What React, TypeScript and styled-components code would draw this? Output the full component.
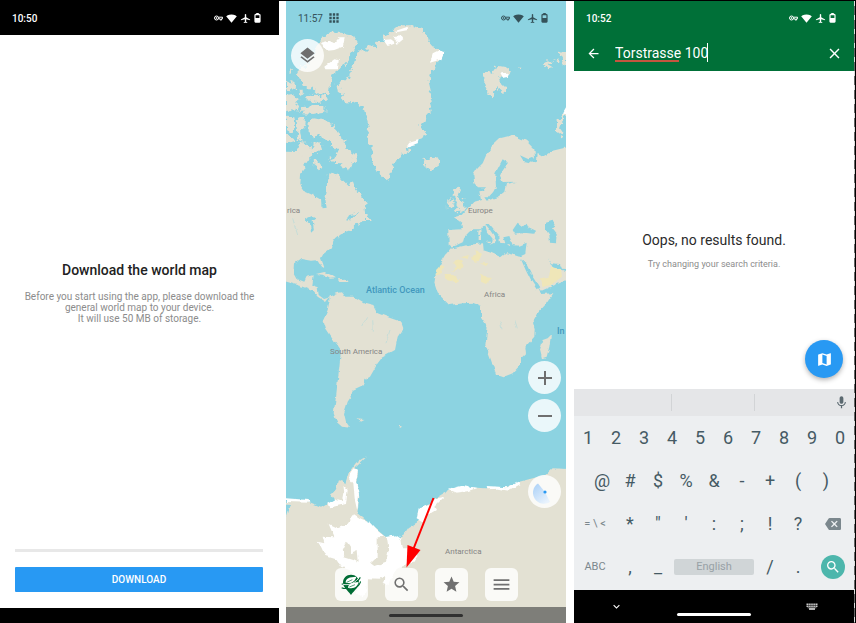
import React from 'react';
import styled, { createGlobalStyle } from 'styled-components';
import {
  MdAirplanemodeActive, MdApps, MdArrowBack, MdBackspace, MdClose, MdKeyboardArrowDown,
  MdLayers, MdMap, MdMenu, MdMic, MdSearch, MdSignalWifi4Bar, MdStar,
} from 'react-icons/md';

const GlobalStyle = createGlobalStyle`
  *, *::before, *::after { box-sizing: border-box; }
  body { margin: 0; background: #fff; font-family: Roboto, "Noto Sans", sans-serif; }
  button, input { font: inherit; color: inherit; border: 0; padding: 0; margin: 0; background: none; }
  h1, h2, p { margin: 0; }
  svg { display: block; flex: none; }
`;

const Page = styled.div`
  min-height: 100vh;
  display: grid;
  grid-template-columns: 279fr 280fr 283fr;
  column-gap: 7px;
  border-top: 1px solid #000;
`;

const Screen = styled.section`
  position: relative;
  min-width: 0;
  display: flex;
  flex-direction: column;
`;

const SearchScreen = styled(Screen)`
  margin-left: 1px;
  padding-right: 2px;
  &::after {
    content: '';
    position: absolute;
    top: 0;
    right: 0;
    bottom: 0;
    width: 2px;
    border-right: 1px solid #000;
    background: repeating-linear-gradient(#ddd 0 5px, #666 5px 14px);
  }
`;

const StatusBar = styled.div<{ $bg: string; $ink: string; $bold?: boolean }>`
  height: 34px;
  flex: none;
  display: flex;
  align-items: center;
  gap: 4px;
  padding: 0 18px 0 12px;
  background: ${p => p.$bg};
  color: ${p => p.$ink};
  font-size: 10px;
  font-weight: ${p => (p.$bold ? 500 : 400)};
`;

const StatusIcons = styled.div`
  margin-left: auto;
  display: flex;
  align-items: center;
  gap: 3px;
`;

const KeyIcon = () => (
  <svg width="9" height="6" viewBox="0 0 9 6" fill="none" stroke="currentColor" strokeWidth="1">
    <circle cx="2.5" cy="3" r="2" /><circle cx="2.5" cy="3" r=".5" />
    <path d="M4.500 2.200H8.500V3.700H7.600V5H6.200V3.800H4.400" />
  </svg>
);

const BatteryIcon = () => (
  <svg width="7" height="10" viewBox="0 0 7 10" fill="none" stroke="currentColor">
    <path d="M2.300 1.200V.5H4.700V1.200" />
    <rect x="1" y="1.7" width="5" height="7.4" rx=".5" strokeWidth="1.2" />
    <path d="M1 5H6V9H1z" fill="currentColor" stroke="none" />
  </svg>
);

const Status = ({ time, bg, ink, bold, apps }: { time: string; bg: string; ink: string; bold?: boolean; apps?: boolean }) => (
  <StatusBar $bg={bg} $ink={ink} $bold={bold}>
    <span>{time}</span>
    {apps && <MdApps size={14} />}
    <StatusIcons>
      <KeyIcon />
      <MdSignalWifi4Bar size={11} />
      <MdAirplanemodeActive size={11} />
      <BatteryIcon />
    </StatusIcons>
  </StatusBar>
);

/* Download screen */

const Intro = styled.div`
  flex: 1;
  display: flex;
  flex-direction: column;
  justify-content: center;
  align-items: center;
  text-align: center;
  padding: 0 16px;
`;

const IntroTitle = styled.h1`
  font-size: 14px;
  line-height: 18px;
  font-weight: 500;
  color: #222;
`;

const IntroText = styled.p`
  margin-top: 12px;
  font-size: 10px;
  line-height: 11px;
  color: #8c8c8c;
`;

const DownloadActions = styled.div`
  padding: 0 16px 16px 15px;
  display: flex;
  flex-direction: column;
  gap: 15px;
`;

const Progress = styled.div`
  height: 3px;
  background: #e8e8e8;
`;

const DownloadButton = styled.button`
  height: 25px;
  border-radius: 1px;
  background: #2899f3;
  color: #fff;
  font-size: 10px;
  font-weight: 500;
`;

const BlackBar = styled.div`
  height: 15px;
  background: #000;
`;

/* Map screen */

const MapCanvas = styled.svg`
  position: absolute;
  inset: 0;
  width: 100%;
  height: 100%;
  background: #8cd3e1;
`;

const MapOverlay = styled.div`
  position: relative;
  flex: 1;
  display: flex;
  flex-direction: column;
`;

const RoundButton = styled.button`
  width: 33px;
  height: 33px;
  border-radius: 50%;
  display: grid;
  place-items: center;
  background: rgba(255, 255, 255, 0.82);
  color: #6f6f6f;
`;

const TopControls = styled.div`
  padding: 4px 5px;
`;

const SideControls = styled.div`
  margin-top: auto;
  padding: 0 5px 60px;
  display: flex;
  flex-direction: column;
  align-items: flex-end;
  gap: 5px;
`;

const LocationButton = styled(RoundButton)`
  margin-top: 38px;
`;

const Toolbar = styled.nav`
  display: flex;
  justify-content: center;
  gap: 17px;
  padding-bottom: 6px;
`;

const ToolButton = styled.button`
  width: 33px;
  height: 33px;
  border-radius: 6px;
  display: grid;
  place-items: center;
  background: rgba(255, 255, 255, 0.82);
  color: #707070;
`;

const GreyBar = styled.div`
  height: 16px;
  display: grid;
  place-items: center;
  background: #7e7e79;
`;

const HomePill = styled.div<{ $ink: string }>`
  width: 74px;
  height: 3px;
  border-radius: 2px;
  background: ${p => p.$ink};
`;

const ArrowMark = styled.svg`
  position: absolute;
  left: 119px;
  bottom: 54px;
`;

const WATER = '#8cd3e1';
const LAND = '#e3e1d3';
const SAND = '#efe6b8';

const Logo = () => (
  <svg width="20" height="22" viewBox="0 0 60 66">
    <path d="M30 2C44 2 54 12 54 26C54 39 42 46 30 63C18 46 6 39 6 26C6 12 16 2 30 2Z" fill="#006c35" />
    <path d="M2 30C10 31 16 30 21 27M58 10C52 20 46 27 36 28M2 41C10 45 16 44 22 41M59 22C55 34 48 40 38 42" stroke="#006c35" strokeWidth="3.500" fill="none" />
    <path d="M14 26C13 12 26 9 46 8C42 22 32 30 14 26Z" fill="#fff" />
    <path d="M6 31C22 34 38 30 52 14" stroke="#fff" strokeWidth="2.500" fill="none" />
    <path d="M21 41C22 28 34 26 53 24C50 38 38 46 21 41Z" fill="#fff" />
    <path d="M17 25L34 17M25 39L42 32" stroke="#006c35" strokeWidth="2" />
  </svg>
);

const WorldMap = () => (
  <MapCanvas viewBox="0 1 280 622" preserveAspectRatio="xMidYMid slice" role="img" aria-label="World map">
    <defs>
      <filter id="coast" x="0" y="0" width="100%" height="100%">
        <feTurbulence type="fractalNoise" baseFrequency="0.16" numOctaves="2" seed="4" />
        <feDisplacementMap in="SourceGraphic" scale="4" xChannelSelector="R" yChannelSelector="G" />
      </filter>
      <filter id="fjords" x="0" y="0" width="100%" height="100%">
        <feTurbulence type="fractalNoise" baseFrequency="0.22" numOctaves="2" seed="9" />
        <feDisplacementMap in="SourceGraphic" scale="8" xChannelSelector="R" yChannelSelector="G" />
      </filter>
    </defs>
    <g filter="url(#fjords)">
      <g transform="scale(.33333)" fill={LAND}>
        <path d="M215 150L245 152L240 136L268 142L272 128L295 130L290 108L318 94L340 76L375 76L402 85L425 105L428 125L440 140L455 150L472 155L470 172L450 190L448 205L435 220L428 245L432 262L438 290L430 310L438 335L420 345L415 365L400 380L418 395L415 412L395 420L370 440L358 460L340 475L325 485L315 515L308 545L290 535L275 515L262 490L258 465L260 440L248 425L245 400L250 385L240 350L232 320L205 305L175 308L165 295L175 285L158 275L155 258L170 240L190 232L195 210L205 190Z" />
        <path d="M102 118L130 98L165 98L200 106L214 130L200 160L180 185L160 208L138 225L142 250L128 262L125 282L95 280L78 262L55 262L42 240L30 222L38 205L60 200L90 150Z" />
        <path d="M60 290L90 284L122 288L126 302L90 306L62 300ZM48 322L80 318L118 318L118 338L80 342L50 340ZM0 240L20 248L35 262L18 272L0 268ZM0 285L20 282L40 298L28 310L42 335L20 328L0 340ZM5 350L25 352L28 380L12 400L0 390L0 360ZM38 352L60 350L58 375L45 390L50 425L38 420L32 385ZM10 205L18 212L14 222L8 214ZM42 270L52 275L44 286L38 278ZM0 410L18 412L30 425L14 430L0 424Z" />
        <path d="M68 368L80 355L108 360L130 362L134 378L155 388L160 408L182 425L180 445L205 462L212 470L200 490L192 512L175 505L165 490L140 488L130 478L150 470L155 452L138 438L128 420L105 418L100 400L82 412L68 400ZM85 425L104 430L108 450L90 462L78 450ZM80 478L100 488L112 505L98 508L82 495ZM30 455L42 425L60 432L80 450L72 475L60 490L50 480Z" />
        <path d="M592 220L605 212L620 222L628 200L640 198L660 202L675 212L668 228L650 232L640 228L645 250L658 262L655 282L642 272L632 258L625 275L622 298L608 282L600 262L592 250ZM698 202L708 204L704 210ZM770 192L790 180L800 188L788 196L802 204L785 208ZM800 180L818 175L815 190ZM820 155L840 150L840 200L825 195L832 178ZM840 325L830 345L812 368L808 395L828 410L832 400L822 385L832 360L840 345Z" />
        <path d="M408 478L425 482L430 472L450 470L462 485L452 500L430 508L415 500L420 490Z" />
        <path d="M502 565L515 560L522 570L515 585L530 600L535 618L542 628L528 638L508 640L516 624L508 610L512 596L500 585ZM488 600L500 590L505 605L498 622L482 622Z" />
        <path d="M128 530L140 518L160 530L175 545L190 560L198 542L208 570L228 588L242 604L240 622L225 636L190 645L178 660L205 648L220 640L232 628L240 645L258 660L235 660L215 672L190 690L165 700L140 720L120 700L110 620Z" />
      </g>
    </g>
    <g filter="url(#coast)">
      <g transform="scale(.33333)">
        <path fill={LAND} d="M-20 452L35 453L52 470L58 505L42 525L40 555L52 572L80 585L106 600L106 620L120 620L133 590L126 560L130 520L160 535L190 570L215 580L235 615L200 640L175 650L180 668L200 670L188 692L165 700L140 720L135 745L112 762L105 775L116 805L108 800L95 780L75 782L45 777L27 790L25 820L35 838L55 845L62 830L80 826L76 855L95 862L98 885L115 898L130 893L120 906L95 890L80 872L50 860L-20 840Z" />
        <path fill={LAND} d="M130 890L150 880L168 877L178 890L205 890L235 908L262 915L275 940L310 953L345 965L352 985L335 1010L327 1050L290 1070L275 1090L252 1130L235 1140L232 1155L200 1170L195 1190L185 1205L180 1222L174 1240L180 1265L192 1283L168 1280L152 1266L143 1240L150 1190L160 1100L165 1050L140 1015L120 985L112 960L125 930L130 905Z" />
        <path fill={LAND} d="M90 822L115 816L135 825L150 835L132 836L110 824ZM155 838L180 836L188 846L160 846ZM215 1255L232 1257L222 1262ZM338 1275L348 1280L342 1284ZM795 1005L790 1040L782 1070L768 1075L762 1050L770 1020L785 1015Z" />
        <path fill={LAND} d="M562 525L575 505L590 490L602 462L620 435L642 415L680 405L720 422L745 448L747 470L728 478L702 466L712 482L736 488L752 486L755 462L770 470L800 452L860 438L860 832L820 850L790 862L765 873L757 862L765 882L802 880L780 912L755 940L740 965L746 985L745 1010L718 1040L720 1060L705 1075L705 1092L680 1120L650 1132L630 1125L615 1080L598 1035L605 980L585 950L585 918L560 908L530 910L490 915L475 900L455 880L445 850L450 820L465 790L480 765L500 742L488 733L487 690L528 688L526 668L504 652L527 645L545 625L562 606L585 600L580 574L592 572L600 562L576 562L565 550Z" />
        <path fill={WATER} d="M650 478L666 488L650 512L642 530L650 546L690 545L660 552L655 575L635 592L602 602L595 592L608 592L622 575L630 560L628 520L638 500Z" />
        <path fill={WATER} d="M495 740L512 735L530 727L534 712L550 695L562 688L585 688L598 676L603 695L620 716L618 728L610 735L625 728L632 720L612 690L598 672L608 672L630 698L640 710L642 728L658 730L652 712L670 708L680 735L700 737L722 728L718 762L700 770L682 764L660 760L645 772L615 758L590 750L588 730L545 735L505 744ZM680 690L695 668L710 680L722 668L728 682L750 692L745 704L705 700L688 704ZM705 778L720 790L740 830L760 862L752 868L735 842L720 812ZM786 775L796 790L822 792L828 806L845 808L845 815L820 808L800 802ZM780 668L800 662L806 675L798 682L812 700L810 730L792 728L790 705L780 690Z" />
        <path fill={LAND} d="M577 692L583 690L584 704L577 705ZM578 708L585 708L585 720L578 720ZM660 733L672 733L668 738ZM602 722L615 722L612 730Z" />
        <path fill={WATER} d="M57 656L75 648L90 656L80 664L84 690L75 698L72 670ZM105 600L118 598L122 620L110 622Z" />
        <path fill={SAND} d="M448 824L460 796L472 798L466 820ZM472 822L498 822L520 840L510 847L482 840ZM502 785L525 780L533 795L525 808L495 813L512 800ZM525 772L548 765L545 778ZM556 778L572 750L588 765L580 782L568 785ZM582 790L608 790L600 798ZM582 824L600 832L618 834L600 852L585 845ZM765 835L788 830L795 802L825 808L828 830L795 855L770 862Z" />
        <path stroke={WATER} fill="none" d="M245 952L230 978M260 958L262 995M312 990L300 1030M642 960L648 988M686 960L694 985M20 655L35 705" />
        <path fill={LAND} d="M-20 1505L60 1505L105 1523L145 1500L135 1485L150 1468L155 1445L168 1440L178 1450L188 1418L210 1388L242 1368L206 1402L216 1420L210 1450L220 1490L214 1540L250 1570L300 1612L345 1615L365 1585L400 1563L395 1540L440 1500L480 1475L540 1462L600 1465L650 1465L700 1445L778 1425L800 1405L860 1408L860 1900L-20 1900Z" />
        <path fill={WATER} d="M-20 1510L12 1512L0 1550L-20 1550Z" />
        <g fill="#fff">
          <path d="M105 128L130 122L145 130L160 112L176 112L170 140L145 150L125 152L112 142ZM115 200L145 178L158 180L156 208L118 208ZM292 120L315 118L330 130L305 138ZM330 92L365 80L366 90L335 96ZM322 108L345 106L352 118L335 132ZM432 188L440 160L460 150L474 160L466 178ZM362 440L370 428L398 420L395 430ZM642 220L668 218L666 230L650 234ZM840 322L830 340L845 345Z" />
          <path d="M204 1543L225 1556L250 1566L272 1590L298 1612L330 1606L346 1617L350 1645L375 1645L395 1668L380 1688L360 1692L352 1702L335 1705L318 1735L310 1758L290 1752L298 1728L280 1736L245 1735L240 1772L230 1795L212 1780L222 1740L190 1710L165 1700L150 1678L118 1668L105 1640L95 1625L115 1630L110 1610L145 1612L128 1572L155 1585L180 1575Z" />
          <path d="M192 1420L202 1405L216 1412L210 1445L219 1485L214 1530L206 1495L202 1450L190 1435ZM120 1512L145 1498L170 1505L175 1480L172 1455L185 1470L180 1512L135 1522ZM0 1495L68 1500L70 1508L0 1506ZM392 1555L398 1525L430 1515L450 1495L475 1490L445 1520L450 1530L425 1545L415 1568ZM488 1470L510 1462L535 1456L572 1464L545 1474L510 1478ZM602 1458L640 1460L662 1462L698 1442L704 1452L668 1472L635 1466L605 1468Z" />
        </g>
        <path fill={LAND} d="M275 1612L302 1610L308 1650L300 1685L265 1698L254 1690L275 1670ZM182 1625L192 1640L192 1660L215 1650L218 1688L202 1680L175 1672L170 1650Z" />
      </g>
    </g>
    <g fill="#858585" fontSize="8" fontFamily="Roboto, sans-serif">
      <text x="1" y="213">rica</text>
      <text x="182" y="213">Europe</text>
      <text x="198" y="297">Africa</text>
      <text x="44" y="354">South America</text>
      <text x="159" y="554">Antarctica</text>
    </g>
    <g fill="#4298bd" fontSize="9" fontWeight="500" fontFamily="Roboto, sans-serif">
      <text x="80" y="293">Atlantic Ocean</text>
      <text x="271" y="334">In</text>
    </g>
  </MapCanvas>
);

/* Search screen */

const Header = styled.header`
  background: #007038;
  color: #fff;
`;

const SearchRow = styled.form`
  height: 36px;
  display: flex;
  align-items: center;
  gap: 14px;
  padding: 0 11px 0 12px;
`;

const IconButton = styled.button`
  display: grid;
  place-items: center;
`;

const Field = styled.div`
  position: relative;
  flex: 1;
  min-width: 0;
`;

const SearchInput = styled.input`
  display: block;
  width: 100%;
  height: 20px;
  font-size: 14px;
  outline: none;
`;

const SpellingMark = styled.span`
  position: absolute;
  left: 0;
  bottom: 1px;
  width: 64px;
  height: 2px;
  background: #c4553f;
`;

const Caret = styled.span`
  position: absolute;
  left: 92px;
  top: 0;
  width: 1px;
  height: 19px;
  background: #fff;
`;

const Results = styled.main`
  position: relative;
  flex: 1;
  display: flex;
  flex-direction: column;
  justify-content: center;
  align-items: center;
  gap: 9px;
  padding-top: 41px;
`;

const EmptyTitle = styled.h2`
  font-size: 14px;
  line-height: 18px;
  font-weight: 400;
  color: #2b2b2b;
`;

const EmptyHint = styled.p`
  font-size: 9px;
  line-height: 12px;
  color: #8c8c8c;
`;

const MapFab = styled.button`
  position: absolute;
  right: 11px;
  bottom: 11px;
  width: 38px;
  height: 38px;
  border-radius: 50%;
  display: grid;
  place-items: center;
  background: #2899f3;
  color: #fff;
  box-shadow: 0 2px 5px rgba(0, 0, 0, 0.3);
`;

const Suggestions = styled.div`
  height: 27px;
  display: grid;
  grid-template-columns: 98fr 83fr 99fr;
  align-items: center;
  background: #e5e6e8;
`;

const Suggestion = styled.div<{ $divided?: boolean }>`
  height: 17px;
  display: flex;
  align-items: center;
  justify-content: flex-end;
  padding-right: 5px;
  border-right: ${p => (p.$divided ? '1px solid #d2d4d6' : '0')};
  color: #5b6970;
`;

const Keys = styled.div`
  background: #edeff1;
  padding-bottom: 2px;
`;

const KeyRow = styled.div<{ $inset?: boolean }>`
  display: grid;
  grid-template-columns: repeat(${p => (p.$inset ? 18 : 20)}, 1fr);
  padding: 0 ${p => (p.$inset ? '5%' : '0')};
`;

const Key = styled.button<{ $span?: number; $small?: boolean }>`
  grid-column: span ${p => p.$span ?? 2};
  height: 43px;
  display: grid;
  place-items: center;
  font-size: ${p => (p.$small ? '11px' : '18px')};
  color: ${p => (p.$small ? '#7b878d' : '#455a64')};
`;

const SpaceBar = styled.span`
  width: calc(100% - 4px);
  height: 16px;
  border-radius: 2px;
  display: grid;
  place-items: center;
  background: #d0d5d7;
  color: #98a1a6;
`;

const EnterDisc = styled.span`
  width: 24px;
  height: 24px;
  border-radius: 50%;
  display: grid;
  place-items: center;
  background: #4db6ac;
  color: #fff;
`;

const SystemBar = styled.div`
  height: 33px;
  display: grid;
  grid-template-columns: 1fr 74px 1fr;
  align-items: center;
  padding: 0 36px;
  background: #000;
  color: #fff;
`;

const SystemPill = styled(HomePill)`
  align-self: end;
  margin-bottom: 7px;
`;

const HideButton = styled(IconButton)`
  justify-self: start;
`;

const SwitchButton = styled(IconButton)`
  justify-self: end;
`;

const KeyboardIcon = () => (
  <svg width="12" height="7" viewBox="0 0 12 7">
    <path d="M.5 1.200H11.500M.5 3.200H11.500" stroke="#ccc" strokeWidth="1.500" strokeDasharray="1.500 .4" />
    <path d="M1.500 4.800H10.500" stroke="#888" strokeWidth="1" />
    <path d="M3 6H9" stroke="#ddd" strokeWidth="1.600" />
  </svg>
);

const DIGITS = ['1', '2', '3', '4', '5', '6', '7', '8', '9', '0'];
const SYMBOLS = ['@', '#', '$', '%', '&', '-', '+', '(', ')'];
const MARKS = ['*', '"', "'", ':', ';', '!', '?'];

export default function App() {
  return (
    <>
      <GlobalStyle />
      <Page>
        <Screen>
          <Status time="10:50" bg="#000" ink="#fff" bold />
          <Intro>
            <IntroTitle>Download the world map</IntroTitle>
            <IntroText>
              Before you start using the app, please download the<br />
              general world map to your device.<br />
              It will use 50 MB of storage.
            </IntroText>
          </Intro>
          <DownloadActions>
            <Progress role="progressbar" aria-label="Download progress" aria-valuenow={0} />
            <DownloadButton type="button">DOWNLOAD</DownloadButton>
          </DownloadActions>
          <BlackBar />
        </Screen>

        <Screen>
          <WorldMap />
          <MapOverlay>
            <Status time="11:57" bg="transparent" ink="#35525a" apps />
            <TopControls>
              <RoundButton type="button" aria-label="Layers"><MdLayers size={19} /></RoundButton>
            </TopControls>
            <SideControls>
              <RoundButton type="button" aria-label="Zoom in">
                <svg width="14" height="14" viewBox="0 0 14 14" stroke="currentColor" strokeWidth="2"><path d="M0 7H14M7 0V14" /></svg>
              </RoundButton>
              <RoundButton type="button" aria-label="Zoom out">
                <svg width="14" height="14" viewBox="0 0 14 14" stroke="currentColor" strokeWidth="2"><path d="M0 7H14" /></svg>
              </RoundButton>
              <LocationButton type="button" aria-label="My location">
                <svg width="24" height="24" viewBox="0 0 24 24">
                  <defs>
                    <linearGradient id="beam" x1="0" y1="0" x2=".7" y2="1">
                      <stop offset="0" stopColor="#a9d0f7" /><stop offset="1" stopColor="#e9f3fd" />
                    </linearGradient>
                  </defs>
                  <path d="M12 12L5 3.500A11 11 0 0 0 17 22Z" fill="url(#beam)" />
                  <circle cx="12" cy="12" r="1.6" fill="#2899f3" />
                </svg>
              </LocationButton>
            </SideControls>
            <Toolbar>
              <ToolButton type="button" aria-label="About"><Logo /></ToolButton>
              <ToolButton type="button" aria-label="Search"><MdSearch size={19} /></ToolButton>
              <ToolButton type="button" aria-label="Bookmarks"><MdStar size={19} /></ToolButton>
              <ToolButton type="button" aria-label="Menu"><MdMenu size={21} /></ToolButton>
            </Toolbar>
            <GreyBar><HomePill $ink="#303030" /></GreyBar>
          </MapOverlay>
          <ArrowMark width="32" height="72" viewBox="0 0 32 72" aria-hidden="true">
            <path d="M28.500 1L8 53" stroke="#f00" strokeWidth="2" />
            <path d="M1.500 70.500L2.500 48L15.500 53Z" fill="#f00" />
          </ArrowMark>
        </Screen>

        <SearchScreen>
          <Header>
            <Status time="10:52" bg="transparent" ink="#fff" bold />
            <SearchRow>
              <IconButton type="button" aria-label="Back"><MdArrowBack size={15} /></IconButton>
              <Field>
                <SearchInput aria-label="Search" defaultValue="Torstrasse 100" spellCheck={false} />
                <SpellingMark />
                <Caret />
              </Field>
              <IconButton type="button" aria-label="Clear"><MdClose size={17} /></IconButton>
            </SearchRow>
          </Header>
          <Results>
            <EmptyTitle>Oops, no results found.</EmptyTitle>
            <EmptyHint>Try changing your search criteria.</EmptyHint>
            <MapFab type="button" aria-label="Show on map"><MdMap size={17} /></MapFab>
          </Results>
          <Suggestions>
            <Suggestion $divided />
            <Suggestion $divided />
            <Suggestion><MdMic size={15} /></Suggestion>
          </Suggestions>
          <Keys>
            <KeyRow>{DIGITS.map(k => <Key type="button" key={k}>{k}</Key>)}</KeyRow>
            <KeyRow $inset>{SYMBOLS.map(k => <Key type="button" key={k}>{k}</Key>)}</KeyRow>
            <KeyRow>
              <Key type="button" $span={3} $small>= \ &lt;</Key>
              {MARKS.map(k => <Key type="button" key={k}>{k}</Key>)}
              <Key type="button" $span={3} $small aria-label="Backspace"><MdBackspace size={16} /></Key>
            </KeyRow>
            <KeyRow>
              <Key type="button" $span={3} $small>ABC</Key>
              <Key type="button">,</Key>
              <Key type="button">_</Key>
              <Key type="button" $span={6} $small><SpaceBar>English</SpaceBar></Key>
              <Key type="button">/</Key>
              <Key type="button">.</Key>
              <Key type="button" $span={3} aria-label="Search"><EnterDisc><MdSearch size={16} /></EnterDisc></Key>
            </KeyRow>
          </Keys>
          <SystemBar>
            <HideButton type="button" aria-label="Hide keyboard"><MdKeyboardArrowDown size={13} /></HideButton>
            <SystemPill $ink="#fff" />
            <SwitchButton type="button" aria-label="Switch keyboard"><KeyboardIcon /></SwitchButton>
          </SystemBar>
        </SearchScreen>
      </Page>
    </>
  );
}
